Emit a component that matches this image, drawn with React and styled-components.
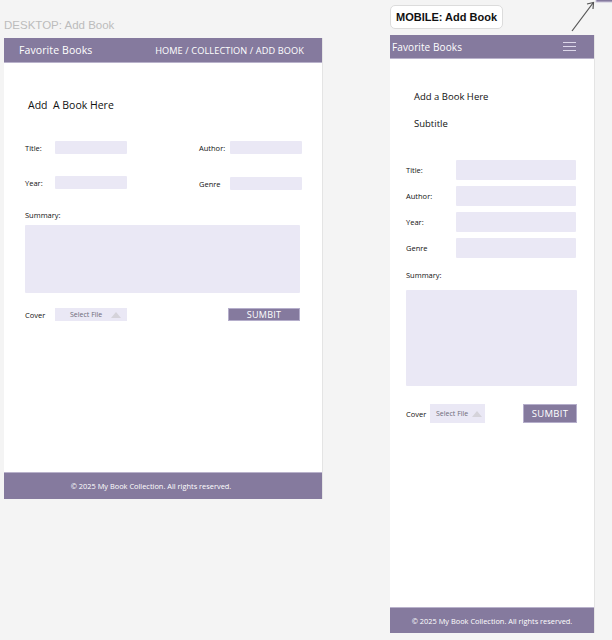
import React from "react";
import styled, { createGlobalStyle } from "styled-components";

const Global = createGlobalStyle`
  html, body { margin: 0; padding: 0; background: #f4f4f4; }
  body { font-family: "Liberation Sans", Arial, sans-serif; }
  * { box-sizing: border-box; }
`;

const PURPLE = "#857a9e";
const FIELD = "#eae8f5";
const HAND = `"Open Sans", "Liberation Sans", sans-serif`;

const Canvas = styled.div`
  position: relative;
  width: 612px;
  height: 640px;
  overflow: hidden;
  display: flex;
  align-items: flex-start;
  padding-left: 4px;
  gap: 67px;
`;

const Column = styled.div`
  display: flex;
  flex-direction: column;
  width: ${(p) => p.$w}px;
  padding-top: ${(p) => p.$top}px;
`;

const PlainLabel = styled.div`
  font-size: 11.5px;
  color: #bcbcbc;
  height: 16px;
  line-height: 16px;
  margin-top: 1px;
  margin-bottom: 5px;
`;

const BoxLabel = styled.div`
  align-self: flex-start;
  font-size: 11px;
  font-weight: 600;
  color: #111;
  background: #fff;
  border: 1px solid #dcdcdc;
  border-radius: 5px;
  height: 24px;
  line-height: 22px;
  padding: 0 5px;
  margin-bottom: 6px;
`;

const Frame = styled.div`
  display: flex;
  flex-direction: column;
  height: ${(p) => p.$h}px;
  background: #fff;
  border-right: 1px solid #e4e4e4;
  font-family: ${HAND};
`;

const Header = styled.header`
  height: ${(p) => p.$h}px;
  flex: none;
  background: ${PURPLE};
  color: #fff;
  display: flex;
  align-items: center;
  justify-content: space-between;
  padding: ${(p) => p.$pad};
  border-bottom: 1px solid #b9b2cb;
`;

const Brand = styled.div`
  font-size: ${(p) => p.$size}px;
  letter-spacing: 0.1px;
`;

const Nav = styled.nav`
  font-size: 9.2px;
  letter-spacing: 0.1px;
`;

const Burger = styled.div`
  display: flex;
  flex-direction: column;
  gap: 3px;
  width: 13px;
  & span {
    display: block;
    height: 1px;
    background: #ddd8ea;
  }
`;

const Main = styled.main`
  flex: 1;
  display: flex;
  flex-direction: column;
  padding: ${(p) => p.$pad};
`;

const Heading = styled.div`
  font-size: ${(p) => p.$size}px;
  color: #111;
  height: 14px;
  line-height: 14px;
  margin-left: ${(p) => p.$indent}px;
  margin-bottom: ${(p) => p.$mb}px;
  white-space: pre;
`;

const Grid = styled.div`
  display: grid;
  grid-template-columns: 102px 103px;
  column-gap: 72px;
  row-gap: ${(p) => p.$rowGap}px;
`;

const Stack = styled.div`
  display: flex;
  flex-direction: column;
  gap: ${(p) => p.$gap}px;
`;

const Field = styled.div`
  display: flex;
  align-items: center;
  margin-top: ${(p) => p.$shift || 0}px;
`;

const Label = styled.span`
  width: ${(p) => p.$w}px;
  flex: none;
  font-size: 7.5px;
  color: #111;
`;

const Input = styled.div`
  width: ${(p) => p.$w}px;
  height: ${(p) => p.$h}px;
  background: ${FIELD};
  border-radius: 1px;
`;

const SummaryLabel = styled.div`
  font-size: 7.5px;
  color: #111;
  margin: ${(p) => p.$m};
  margin-left: 0;
`;

const TextArea = styled.div`
  width: ${(p) => p.$w}px;
  height: ${(p) => p.$h}px;
  background: ${FIELD};
  border-radius: 1px;
`;

const BottomRow = styled.div`
  display: flex;
  align-items: center;
  margin-top: ${(p) => p.$mt}px;
  width: ${(p) => p.$w}px;
`;

const Select = styled.div`
  width: ${(p) => p.$w}px;
  height: ${(p) => p.$h}px;
  background: ${FIELD};
  display: flex;
  align-items: center;
  justify-content: space-between;
  padding: 0 ${(p) => p.$pr}px 0 ${(p) => p.$pl}px;
  font-size: 7px;
  color: #6d6a78;
`;

const Tri = styled.span`
  width: 0;
  height: 0;
  border-left: 5px solid transparent;
  border-right: 5px solid transparent;
  border-bottom: 6px solid #d5d3da;
`;

const Button = styled.div`
  margin-left: auto;
  width: ${(p) => p.$w}px;
  height: ${(p) => p.$h}px;
  background: ${PURPLE};
  color: #fff;
  font-size: ${(p) => p.$size}px;
  display: flex;
  align-items: center;
  justify-content: center;
  border: 1px solid #b5aecb;
  letter-spacing: 0.3px;
`;

const Footer = styled.footer`
  height: ${(p) => p.$h}px;
  flex: none;
  background: ${PURPLE};
  color: #fff;
  font-size: 7.4px;
  display: flex;
  align-items: center;
  justify-content: center;
  padding-right: ${(p) => p.$shiftLeft || 0}px;
  border-top: 1px solid #b9b2cb;
`;

const Arrow = styled.svg`
  position: absolute;
  right: 0;
  top: 0;
`;

export default function App() {
  return (
    <>
      <Global />
      <Canvas>
        <Column $w={319} $top={16}>
          <PlainLabel>DESKTOP: Add Book</PlainLabel>
          <Frame $h={461}>
            <Header $h={25} $pad="0 18px 0 15px">
              <Brand $size={10.5}>Favorite Books</Brand>
              <Nav>HOME / COLLECTION / ADD BOOK</Nav>
            </Header>
            <Main $pad="35px 21px 0 21px">
              <Heading $size={10.5} $indent={3} $mb={29}>{"Add  A Book Here"}</Heading>
              <Grid $rowGap={21}>
                <Field>
                  <Label $w={30}>Title:</Label>
                  <Input $w={72} $h={13} />
                </Field>
                <Field>
                  <Label $w={31}>Author:</Label>
                  <Input $w={72} $h={13} />
                </Field>
                <Field>
                  <Label $w={30}>Year:</Label>
                  <Input $w={72} $h={13} />
                </Field>
                <Field $shift={2}>
                  <Label $w={31}>Genre</Label>
                  <Input $w={72} $h={13} />
                </Field>
              </Grid>
              <SummaryLabel $m="20px 0 5px">Summary:</SummaryLabel>
              <TextArea $w={275} $h={68} />
              <BottomRow $mt={15} $w={275}>
                <Label $w={30}>Cover</Label>
                <Select $w={72} $h={13} $pl={15} $pr={6}>
                  Select File <Tri />
                </Select>
                <Button $w={72} $h={13} $size={9}>SUMBIT</Button>
              </BottomRow>
            </Main>
            <Footer $h={27} $shiftLeft={24}>© 2025 My Book Collection. All rights reserved.</Footer>
          </Frame>
        </Column>
        <Column $w={205} $top={5}>
          <BoxLabel>MOBILE: Add Book</BoxLabel>
          <Frame $h={598}>
            <Header $h={24} $pad="0 18px 0 2px">
              <Brand $size={10}>Favorite Books</Brand>
              <Burger>
                <span />
                <span />
                <span />
              </Burger>
            </Header>
            <Main $pad="31px 17px 0 16px">
              <Heading $size={9.5} $indent={8} $mb={13}>Add a Book Here</Heading>
              <Heading $size={9.5} $indent={8} $mb={29}>Subtitle</Heading>
              <Stack $gap={6}>
                <Field>
                  <Label $w={50}>Title:</Label>
                  <Input $w={120} $h={20} />
                </Field>
                <Field>
                  <Label $w={50}>Author:</Label>
                  <Input $w={120} $h={20} />
                </Field>
                <Field>
                  <Label $w={50}>Year:</Label>
                  <Input $w={120} $h={20} />
                </Field>
                <Field>
                  <Label $w={50}>Genre</Label>
                  <Input $w={120} $h={20} />
                </Field>
              </Stack>
              <SummaryLabel $m="12px 0 10px">Summary:</SummaryLabel>
              <TextArea $w={171} $h={96} />
              <BottomRow $mt={18} $w={171}>
                <Label $w={24}>Cover</Label>
                <Select $w={55} $h={19} $pl={6} $pr={3}>
                  Select File <Tri />
                </Select>
                <Button $w={54} $h={19} $size={9.5}>SUMBIT</Button>
              </BottomRow>
            </Main>
            <Footer $h={26}>© 2025 My Book Collection. All rights reserved.</Footer>
          </Frame>
        </Column>
        <Arrow width="50" height="40" viewBox="0 0 50 40">
          <rect x="34" y="-2" width="18" height="4" fill={PURPLE} stroke="#c8c2d8" />
          <line x1="10" y1="31" x2="31" y2="3" stroke="#555" strokeWidth="1.2" />
          <polyline points="25,4 31.5,2.5 31,9" fill="none" stroke="#555" strokeWidth="1.2" />
        </Arrow>
      </Canvas>
    </>
  );
}
